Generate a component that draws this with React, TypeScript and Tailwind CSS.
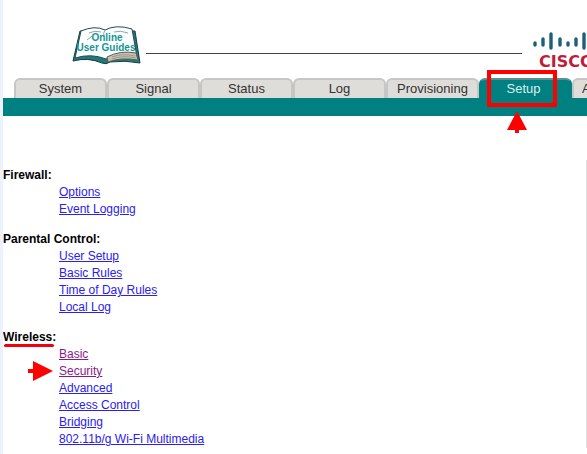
import { clsx } from "clsx";

interface MenuLink {
  label: string;
  visited?: boolean;
  marked?: boolean;
}

interface MenuGroup {
  title: string;
  underlined?: boolean;
  links: MenuLink[];
}

const TABS = ["System", "Signal", "Status", "Log", "Provisioning", "Setup"];

const GROUPS: MenuGroup[] = [
  {
    title: "Firewall:",
    links: [{ label: "Options" }, { label: "Event Logging" }],
  },
  {
    title: "Parental Control:",
    links: [
      { label: "User Setup" },
      { label: "Basic Rules" },
      { label: "Time of Day Rules" },
      { label: "Local Log" },
    ],
  },
  {
    title: "Wireless:",
    underlined: true,
    links: [
      { label: "Basic", visited: true },
      { label: "Security", visited: true, marked: true },
      { label: "Advanced" },
      { label: "Access Control" },
      { label: "Bridging" },
      { label: "802.11b/g Wi-Fi Multimedia" },
    ],
  },
];

// x, top and bottom of each bar in the bridge mark
const BARS = [
  [2, 9, 15],
  [10, 5, 15],
  [18, 0, 18],
  [27, 5, 15],
  [35, 9, 15],
  [43, 5, 15],
  [51, 0, 18],
  [60, 5, 15],
  [68, 9, 15],
];

function GuidesBook() {
  return (
    <svg width="70" height="40" viewBox="0 0 70 40" className="block" aria-label="Online User Guides">
      <path d="M8 5 L1 35 Q16 31 30 37 Q34 39 38 36 Q53 34 68 37 L63 5 Z" fill="#23797a" stroke="#163f43" strokeWidth="1" />
      <path d="M9 5 Q23 -1 33 4 Q44 -2 60 3 L65 31 Q47 28 34 33 Q19 27 3 32 Z" fill="#fbffff" stroke="#29484b" strokeWidth="1" />
      <path d="M35 31 Q48 24 64 27 L66 34 Q49 31 36 36 Z" fill="#c9c1b0" stroke="#55605a" strokeWidth="1" />
      <path d="M40 31 Q50 27 63 30 M40 33 Q51 29 64 32" fill="none" stroke="#817b70" strokeWidth="0.6" />
      <path d="M33 4 Q31 7 32 10 M17 7 Q23 4 29 6 M42 6 Q48 4 56 7 M15 14 L20 10" fill="none" stroke="#8da5a5" strokeWidth="1" />
      <text x="35" y="15" textAnchor="middle" fontSize="10" fontWeight="bold" fill="#159494">Online</text>
      <text x="34" y="25" textAnchor="middle" fontSize="10" fontWeight="bold" fill="#159494">User Guides</text>
    </svg>
  );
}

function CiscoLogo() {
  return (
    <svg width="76" height="37" viewBox="0 0 76 37" className="block" aria-label="Cisco">
      {BARS.map(([x, top, bottom]) => (
        <path key={x} d={`M${x} ${top + 2}V${bottom - 2}`} stroke="#1d5f78" strokeWidth="3.4" strokeLinecap="round" />
      ))}
      <text x="6" y="35" fontSize="16" fontWeight="bold" fill="#bd1f3a" className="font-['DejaVu_Sans',sans-serif]">CISCO</text>
    </svg>
  );
}

function Tab({ label }: { label: string }) {
  const active = label === "Setup";
  return (
    <button
      className={clsx(
        "relative h-5 w-[93px] shrink-0 rounded-t-md border-2 border-b-0 text-[13px] leading-[18px]",
        active ? "border-[#008080] border-t-[#5c8f8f] bg-[#008080] pr-1 text-[#d8f0f0]" : "border-[#c6c6c6] bg-[#deddd9] text-[#333]"
      )}
    >
      {label}
      {active && (
        <>
          <span className="absolute -top-[10px] left-[6px] h-[37px] w-[70px] border-4 border-[#ff0000]" />
          <svg width="20" height="22" viewBox="0 0 20 22" className="absolute top-[31px] left-[26px]" aria-hidden="true">
            <path d="M10 0 L20 19 H12 V22 H8 V19 H0 Z" fill="#ff0000" />
          </svg>
        </>
      )}
    </button>
  );
}

export default function App() {
  return (
    <div className="min-h-screen overflow-x-hidden border-l-[3px] border-[#ebf2fd] bg-white font-['Liberation_Sans',Arial,sans-serif] text-xs text-black">
      <header className="flex h-[78px] items-start pt-[26px] pl-[69px]">
        <GuidesBook />
        <div className="mt-[27px] ml-1 h-px flex-1 bg-[#444]" />
        <div className="mt-[6px] ml-[11px] w-[54px] shrink-0">
          <CiscoLogo />
        </div>
      </header>

      <nav className="flex pl-[11px]">
        {TABS.map((label) => (
          <Tab key={label} label={label} />
        ))}
        <button className="h-5 w-[93px] shrink-0 rounded-t-md border-2 border-b-0 border-[#c6c6c6] bg-[#deddd9] pl-2 text-left text-[13px] leading-[18px] text-[#333]">
          A
        </button>
      </nav>
      <div className="h-[18px] bg-[#008080]" />

      <main className="mt-[44px] border-r border-[#e2e2e2] pt-[7px]">
        {GROUPS.map((group) => (
          <section key={group.title} className="mb-[13px] leading-[17px]">
            <h2 className="relative w-fit font-bold">
              {group.title}
              {group.underlined && <span className="absolute top-[15px] left-px h-[3px] w-[50px] rounded-full bg-[#f0000a]" />}
            </h2>
            <ul className="pl-14">
              {group.links.map((link) => (
                <li key={link.label} className="relative">
                  {link.marked && (
                    <svg width="25" height="20" viewBox="0 0 25 20" className="absolute -left-[31px] -top-0.5" aria-hidden="true">
                      <path d="M0 8 H5 V0 L25 10 L5 20 V12 H0 Z" fill="#ff0000" />
                    </svg>
                  )}
                  <a href="#" className={clsx("underline", link.visited ? "text-[#8a1a8a]" : "text-[#2a20f0]")}>
                    {link.label}
                  </a>
                </li>
              ))}
            </ul>
          </section>
        ))}
      </main>
    </div>
  );
}
